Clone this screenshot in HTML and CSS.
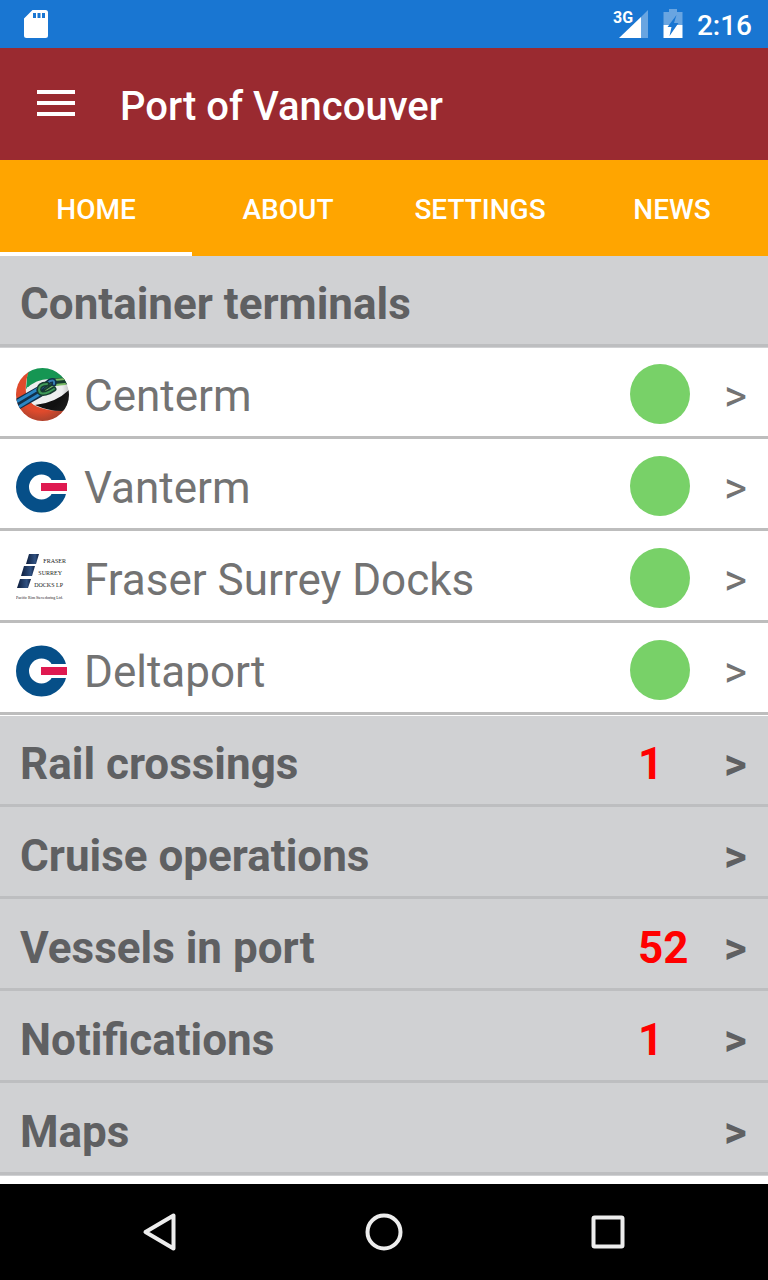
FILE: index.html
```html
<!DOCTYPE html>
<html lang="en">
<head>
    <meta charset="UTF-8">
    <meta name="viewport" content="width=device-width, initial-scale=1.0">
    <title>Port of Vancouver</title>
    <link rel="stylesheet" href="styles.css">
</head>
<body>
    <div class="status-bar">
        <svg class="sd-card" width="24" height="28" viewBox="0 0 24 28">
            <path fill="#fff" fill-rule="evenodd" d="M8.500 0H21.500Q24 0 24 2.500V25.500Q24 28 21.500 28H2.500Q0 28 0 25.500V8.500ZM9 3V8H12V3ZM13.500 3V8H16.500V3ZM18 3V8H21V3Z"/>
        </svg>
        <div class="status-icons">
            <svg width="36" height="30" viewBox="0 0 36 30">
                <path fill="#fff" opacity=".35" d="M28 8L35 1V29H28Z"/>
                <path fill="#fff" d="M28 8V29H6Z"/>
                <text class="network" x="0" y="14">3G</text>
            </svg>
            <svg width="20" height="30" viewBox="0 0 20 30">
                <path fill="#fff" opacity=".35" d="M6 0H14V3H19.500V16H.500V3H6Z"/>
                <path fill="#fff" d="M.500 16H19.500V29H.500Z"/>
                <path fill="#1976d2" d="M13.500 6L4.500 18H8.500L6.500 27L15.500 14H11Z"/>
            </svg>
            <span class="clock">2:16</span>
        </div>
    </div>

    <header class="navbar">
        <button class="menu-toggle" aria-label="Menu">
            <span></span>
            <span></span>
            <span></span>
        </button>
        <h1>Port of Vancouver</h1>
    </header>

    <nav class="tabs">
        <a href="#home" class="active">HOME</a>
        <a href="#about">ABOUT</a>
        <a href="#settings">SETTINGS</a>
        <a href="#news">NEWS</a>
    </nav>

    <main>
        <h2 class="row section"><span class="name">Container terminals</span></h2>

        <a href="#centerm" class="row terminal">
            <svg class="logo" width="54" height="54" viewBox="0 0 54 54">
                <defs>
                    <clipPath id="ball"><circle cx="26.500" cy="27.500" r="26.500"/></clipPath>
                    <radialGradient id="shade" cx=".45" cy=".4" r=".6">
                        <stop offset=".7" stop-color="#333" stop-opacity="0"/>
                        <stop offset="1" stop-color="#333" stop-opacity=".3"/>
                    </radialGradient>
                </defs>
                <g clip-path="url(#ball)">
                    <rect width="54" height="54" fill="#eeeff0"/>
                    <path fill="#159653" d="M12 0H54V19Q44 12 33 12Q20 12 10 22Z"/>
                    <path fill="#e04a2c" d="M0 0L13 4Q9 14 10 26Q13 38 25 41Q36 45 50 43V54H0Z"/>
                    <path fill="#eeeff0" d="M11 20Q10 32 18 38L28 40L30 30Z"/>
                    <path fill="#111" d="M19 38Q40 36 54 22V40Q51 43 46 44Q32 44 19 38Z"/>
                    <circle cx="26.500" cy="27.500" r="26.500" fill="url(#shade)"/>
                    <g fill="none" stroke-linecap="round" stroke-linejoin="round">
                        <path stroke="#12304a" stroke-width="11" d="M0 38L23 25"/>
                        <path stroke="#2b86c4" stroke-width="3" d="M0 35L22 22M1 41L24 27"/>
                        <path stroke="#173d31" stroke-width="7" d="M49 14L38 15L30 22"/>
                        <path stroke="#7cbd68" stroke-width="2" d="M49 12L38 13L28 21M49 17L39 18L30 24"/>
                        <path stroke="#12304a" stroke-width="5" d="M23 23L34 14Q39 12 38 17"/>
                        <path stroke="#397fb5" stroke-width="2" d="M23 23L34 14Q39 12 38 17"/>
                        <path stroke="#173d31" stroke-width="5" d="M31 17Q23 17 23 23Q24 29 33 25L38 22"/>
                        <path stroke="#3f9a58" stroke-width="2" d="M31 17Q23 17 23 23Q24 29 33 25L38 22"/>
                    </g>
                </g>
            </svg>
            <span class="name">Centerm</span>
            <span class="status"><i class="dot"></i></span>
            <span class="arrow">&gt;</span>
        </a>

        <a href="#vanterm" class="row terminal">
            <svg class="logo" width="54" height="54" viewBox="0 0 54 54">
                <circle cx="25.500" cy="28" r="19" fill="none" stroke="#064f88" stroke-width="13"/>
                <path fill="#fff" d="M25 21H54V35H25Z"/>
                <path fill="#064f88" d="M35 21L40 16L49 21ZM35 35H49L40 40Z"/>
                <path fill="#df1950" d="M25 24H51V32H25Z"/>
            </svg>
            <span class="name">Vanterm</span>
            <span class="status"><i class="dot"></i></span>
            <span class="arrow">&gt;</span>
        </a>

        <a href="#fraser-surrey-docks" class="row terminal">
            <svg class="logo" width="54" height="54" viewBox="0 0 54 54">
                <defs>
                    <linearGradient id="dock" x1="0" x2="1">
                        <stop offset="0" stop-color="#0d1d3c"/>
                        <stop offset=".7" stop-color="#315282"/>
                        <stop offset="1" stop-color="#101f40"/>
                    </linearGradient>
                </defs>
                <path fill="url(#dock)" d="M13 3H23L20 13H10Z"/>
                <path fill="url(#dock)" d="M8 15H19L16 25H5Z"/>
                <path fill="url(#dock)" d="M4 28H15L12 37H1Z"/>
                <g class="dock-name">
                    <text x="50" y="12" text-anchor="end">FRASER</text>
                    <text x="46" y="24" text-anchor="end">SURREY</text>
                    <text x="47" y="36" text-anchor="end">DOCKS LP</text>
                </g>
                <text class="dock-owner" x="0" y="48">Pacific Rim Stevedoring Ltd.</text>
            </svg>
            <span class="name">Fraser Surrey Docks</span>
            <span class="status"><i class="dot"></i></span>
            <span class="arrow">&gt;</span>
        </a>

        <a href="#deltaport" class="row terminal">
            <svg class="logo" width="54" height="54" viewBox="0 0 54 54">
                <circle cx="25.500" cy="28" r="19" fill="none" stroke="#064f88" stroke-width="13"/>
                <path fill="#fff" d="M25 21H54V35H25Z"/>
                <path fill="#064f88" d="M35 21L40 16L49 21ZM35 35H49L40 40Z"/>
                <path fill="#df1950" d="M25 24H51V32H25Z"/>
            </svg>
            <span class="name">Deltaport</span>
            <span class="status"><i class="dot"></i></span>
            <span class="arrow">&gt;</span>
        </a>

        <a href="#rail" class="row section">
            <span class="name">Rail crossings</span>
            <span class="status count">1</span>
            <span class="arrow">&gt;</span>
        </a>
        <a href="#cruise" class="row section">
            <span class="name">Cruise operations</span>
            <span class="arrow">&gt;</span>
        </a>
        <a href="#vessels" class="row section">
            <span class="name">Vessels in port</span>
            <span class="status count">52</span>
            <span class="arrow">&gt;</span>
        </a>
        <a href="#notifications" class="row section">
            <span class="name">Notifications</span>
            <span class="status count">1</span>
            <span class="arrow">&gt;</span>
        </a>
        <a href="#maps" class="row section">
            <span class="name">Maps</span>
            <span class="arrow">&gt;</span>
        </a>
    </main>

    <footer class="system-nav">
        <button aria-label="Back">
            <svg width="40" height="40" viewBox="0 0 40 40">
                <path d="M33.500 3.500V36.500L5.500 20Z"/>
            </svg>
        </button>
        <button aria-label="Home">
            <svg width="40" height="40" viewBox="0 0 40 40">
                <circle cx="20" cy="20" r="16.500"/>
            </svg>
        </button>
        <button aria-label="Recent apps">
            <svg width="40" height="40" viewBox="0 0 40 40">
                <rect x="5.500" y="5.500" width="29" height="29" rx="1"/>
            </svg>
        </button>
    </footer>
</body>
</html>
```

FILE: styles.css
```css
* {
    box-sizing: border-box;
}

body {
    margin: 0;
    min-height: 100vh;
    display: flex;
    flex-direction: column;
    background-color: #fff;
    font-family: Roboto, sans-serif;
}

a {
    color: inherit;
    text-decoration: none;
}

button {
    border: none;
    padding: 0;
    background: none;
    cursor: pointer;
}

.status-bar {
    height: 48px;
    padding: 0 16px 0 24px;
    display: flex;
    justify-content: space-between;
    align-items: center;
    background-color: #1976d2;
    color: #fff;
}

.status-icons {
    display: flex;
    align-items: center;
    gap: 14px;
}

.status-icons svg {
    overflow: visible;
}

.network {
    fill: #fff;
    font-size: 16px;
    font-weight: 700;
}

.clock {
    padding-top: 4px;
    font-size: 28px;
    line-height: 32px;
    font-weight: 500;
}

.navbar {
    height: 112px;
    padding: 0 36px;
    display: flex;
    align-items: center;
    gap: 44px;
    background-color: #9a2a30;
    color: #fff;
}

.menu-toggle {
    width: 40px;
    padding: 0 1px 2px;
    display: flex;
    flex-direction: column;
    gap: 7px;
}

.menu-toggle span {
    height: 4px;
    background-color: #fff;
}

.navbar h1 {
    margin: 0;
    padding-top: 6px;
    font-size: 40px;
    line-height: 48px;
    font-weight: 500;
}

.tabs {
    height: 96px;
    display: flex;
    background-color: #ffa500;
    color: #fff;
}

.tabs a {
    flex: 1;
    display: flex;
    justify-content: center;
    align-items: center;
    padding-top: 6px;
    border-bottom: 4px solid transparent;
    font-size: 28px;
    font-weight: 500;
}

.tabs .active {
    border-bottom-color: #fff;
}

main {
    flex: 1;
    padding-bottom: 8px;
}

.row {
    height: 92px;
    margin: 0;
    padding: 0 20px;
    display: flex;
    align-items: center;
    font-size: 44px;
    line-height: 52px;
}

/* divider with a thin strip of the row colour under it */
.section {
    background-color: #d0d1d3;
    box-shadow: inset 0 -1px #d0d1d3, inset 0 -4px #bdbec0;
    color: #5f6062;
    font-weight: 700;
}

.terminal {
    padding-left: 16px;
    background-color: #fff;
    box-shadow: inset 0 -1px #fff, inset 0 -4px #bdbdbd;
    color: #737373;
}

.logo {
    margin-right: 14px;
}

.name {
    flex: 1;
    padding-top: 4px;
}

.status {
    width: 94px;
}

.dot {
    display: block;
    width: 60px;
    height: 60px;
    border-radius: 50%;
    background-color: #78d168;
}

.count {
    padding: 4px 0 0 8px;
    color: #f00;
}

.arrow {
    width: 24px;
    padding-top: 4px;
}

.dock-name {
    fill: #222;
    font-family: "Liberation Serif", serif;
    font-size: 6px;
}

.dock-owner {
    fill: #222;
    font-family: "Liberation Serif", serif;
    font-size: 4px;
}

.system-nav {
    height: 96px;
    display: flex;
    justify-content: center;
    align-items: center;
    gap: 184px;
    background-color: #000;
}

.system-nav svg {
    display: block;
    fill: none;
    stroke: #ededed;
    stroke-width: 4px;
    stroke-linejoin: round;
}
```
